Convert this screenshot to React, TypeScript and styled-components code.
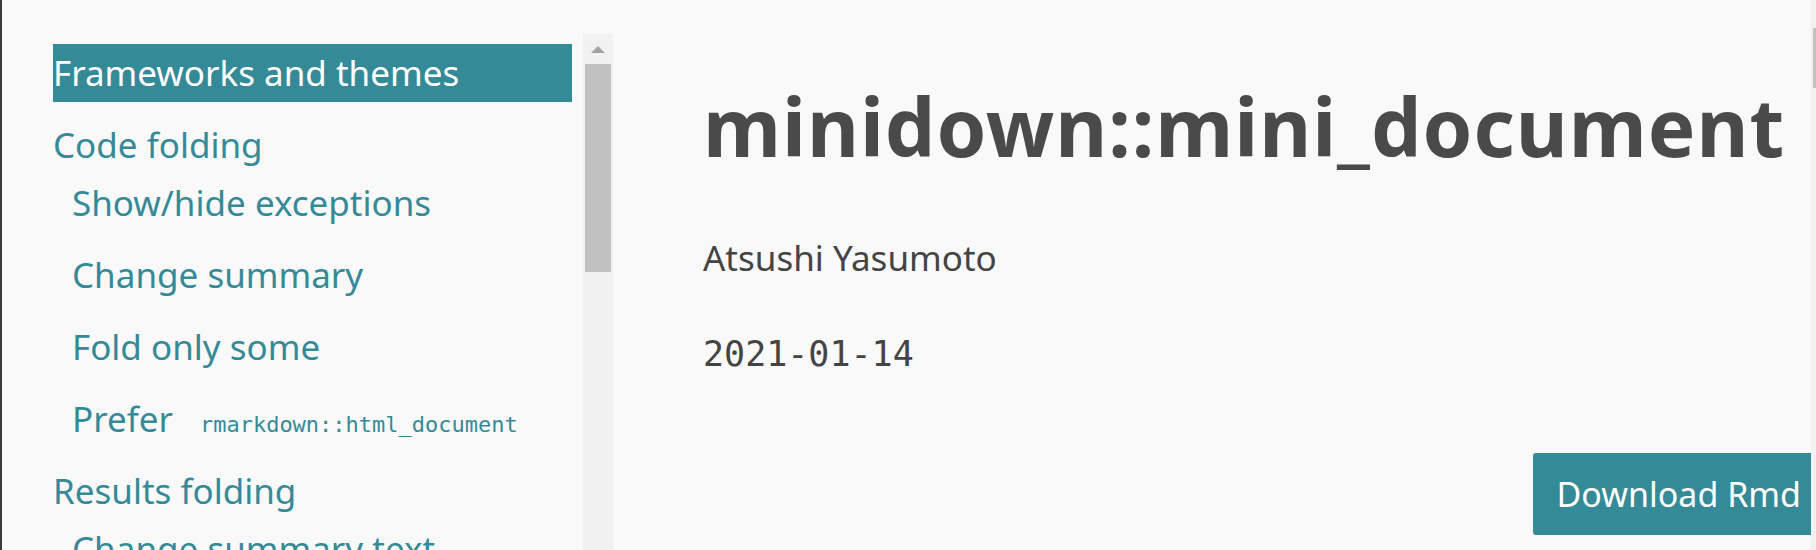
import React from 'react'
import styled, { createGlobalStyle } from 'styled-components'

const GlobalStyle = createGlobalStyle`
  html, body {
    margin: 0;
    padding: 0;
    background: #f9f9f9;
    overflow: hidden;
  }
  body {
    font-family: "Noto Sans", "DejaVu Sans", sans-serif;
    color: #444444;
  }
`

const Page = styled.div`
  display: flex;
  height: 550px;
  width: 1816px;
  box-sizing: border-box;
  border-left: 2px solid #3c3c3c;
  background: #f9f9f9;
  overflow: hidden;
`

const Nav = styled.nav`
  display: flex;
  width: 611px;
  flex-shrink: 0;
  margin-top: 34px;
  height: calc(100% - 34px);
`

const NavList = styled.ul`
  flex: 1;
  list-style: none;
  margin: 0;
  padding: 10px 11px 0 51px;
  overflow: hidden;

  li + li {
    margin-top: 14px;
  }
`

const SubList = styled.ul`
  list-style: none;
  margin: 0;
  padding: 0 0 0 19px;
`

const NavLink = styled.a<{ $active?: boolean }>`
  display: block;
  height: 58px;
  line-height: 58px;
  font-size: 35px;
  white-space: nowrap;
  text-decoration: none;
  color: ${(p) => (p.$active ? '#ffffff' : '#358a98')};
  background: ${(p) => (p.$active ? '#358a98' : 'transparent')};
`

const InlineCode = styled.code`
  font-family: "DejaVu Sans Mono", "Liberation Mono", monospace;
  font-size: 22px;
  margin-left: 27px;
`

const ScrollTrack = styled.div`
  width: 30px;
  flex-shrink: 0;
  background: #f1f1f1;
  display: flex;
  flex-direction: column;
  align-items: center;
`

const ScrollArrow = styled.div`
  height: 30px;
  width: 100%;
  display: flex;
  align-items: center;
  justify-content: center;

  &::before {
    content: '';
    width: 0;
    height: 0;
    border-left: 7px solid transparent;
    border-right: 7px solid transparent;
    border-bottom: 7px solid #a3a3a3;
  }
`

const ScrollThumb = styled.div<{ $h: number }>`
  width: 26px;
  height: ${(p) => p.$h}px;
  background: #c1c1c1;
`

const Main = styled.main`
  width: 1198px;
  flex-shrink: 0;
  box-sizing: border-box;
  padding-left: 90px;
  overflow: hidden;
`

const Title = styled.h1`
  margin: 78px 0 0;
  font-size: 80px;
  line-height: 1.2;
  font-weight: 700;
  letter-spacing: 1px;
  color: #4a4a4a;
  white-space: nowrap;
`

const Author = styled.p`
  margin: 58px 0 0;
  font-size: 35px;
  line-height: 1.5;
  color: #444444;
`

const DateLine = styled.p`
  margin: 43px 0 0;
  font-family: "DejaVu Sans Mono", "Liberation Mono", monospace;
  font-size: 35px;
  line-height: 1.5;
  color: #444444;
`

const ButtonRow = styled.div`
  display: flex;
  justify-content: flex-end;
  margin: 73px -14px 0 0;
`

const DownloadButton = styled.a`
  display: flex;
  align-items: center;
  height: 82px;
  padding: 0 24px;
  border-radius: 3px;
  background: #358a98;
  color: #ffffff;
  font-size: 34px;
  text-decoration: none;
  white-space: nowrap;
`

const PageScroll = styled.div`
  width: 5px;
  flex-shrink: 0;
  background: #f1f1f1;
  display: flex;
  justify-content: flex-end;
`

const PageThumb = styled.div`
  width: 3px;
  height: 60px;
  margin-top: 28px;
  background: #c1c1c1;
`

export default function App() {
  return (
    <>
      <GlobalStyle />
      <Page>
        <Nav>
          <NavList>
            <li>
              <NavLink href="#" $active>Frameworks and themes</NavLink>
            </li>
            <li>
              <NavLink href="#">Code folding</NavLink>
              <SubList>
                <li><NavLink href="#">Show/hide exceptions</NavLink></li>
                <li><NavLink href="#">Change summary</NavLink></li>
                <li><NavLink href="#">Fold only some</NavLink></li>
                <li>
                  <NavLink href="#">
                    Prefer<InlineCode>rmarkdown::html_document</InlineCode>
                  </NavLink>
                </li>
              </SubList>
            </li>
            <li>
              <NavLink href="#">Results folding</NavLink>
              <SubList>
                <li><NavLink href="#">Change summary text</NavLink></li>
              </SubList>
            </li>
          </NavList>
          <ScrollTrack>
            <ScrollArrow />
            <ScrollThumb $h={208} />
          </ScrollTrack>
        </Nav>
        <Main>
          <Title>minidown::mini_document</Title>
          <Author>Atsushi Yasumoto</Author>
          <DateLine>2021-01-14</DateLine>
          <ButtonRow>
            <DownloadButton href="#">Download Rmd</DownloadButton>
          </ButtonRow>
        </Main>
        <PageScroll>
          <PageThumb />
        </PageScroll>
      </Page>
    </>
  )
}
